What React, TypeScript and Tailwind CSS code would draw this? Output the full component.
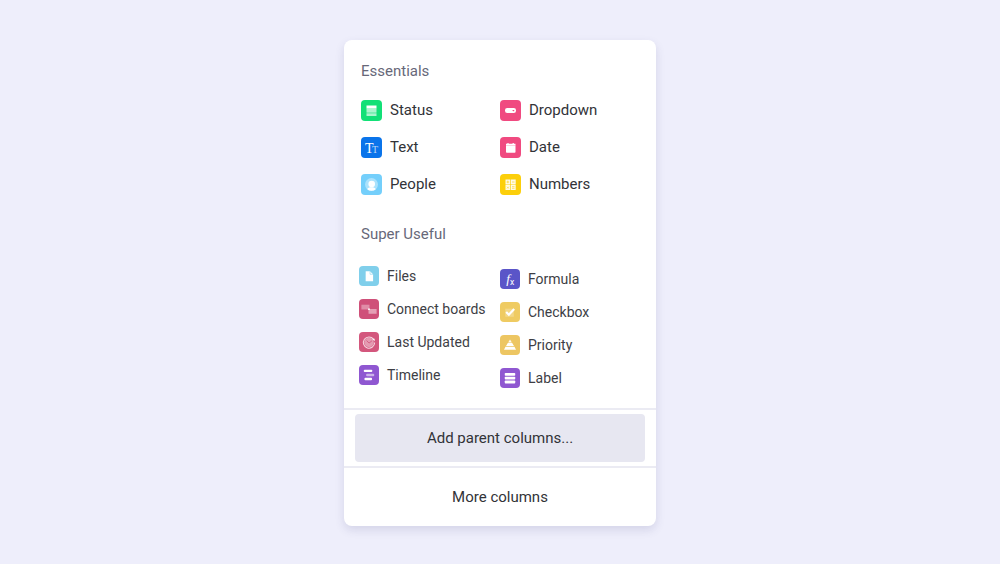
import React from 'react';

interface ColumnType {
  label: string;
  color: string;
  icon: React.ReactNode;
}

const essentials: ColumnType[] = [
  {
    label: 'Status',
    color: 'bg-[#12e077]',
    icon: (
      <>
        <rect x="5.5" y="5.5" width="10" height="3" fill="#fff" />
        <rect x="5.5" y="8.5" width="10" height="3.5" fill="#fff" opacity="0.65" />
        <rect x="5.5" y="12" width="10" height="1.5" fill="#fff" opacity="0.45" />
        <rect x="5.5" y="13.5" width="10" height="2.5" fill="#fff" opacity="0.65" />
      </>
    ),
  },
  {
    label: 'Dropdown',
    color: 'bg-[#f04a80]',
    icon: (
      <>
        <rect x="5" y="8" width="11" height="5" rx="2.2" fill="#fff" />
        <path d="M12.2 10l1.2 1.4 1.2-1.4z" fill="#f04a80" />
      </>
    ),
  },
  {
    label: 'Text',
    color: 'bg-[#0a74ea]',
    icon: (
      <>
        <text x="4" y="16" fontSize="14" fill="#fff" className="font-['Liberation_Serif',serif]">T</text>
        <text x="11" y="16" fontSize="10" fill="#fff" opacity="0.7" className="font-['Liberation_Serif',serif]">T</text>
      </>
    ),
  },
  {
    label: 'Date',
    color: 'bg-[#f04a80]',
    icon: (
      <>
        <path d="M6 6.8h1.4V6h1.2v.8h4V6h1.2v.8h1.7V15a.8.8 0 0 1-.8.8H6.8A.8.8 0 0 1 6 15z" fill="#fff" />
        <path d="M6 8.4h9.5" stroke="#f04a80" strokeWidth="0.5" opacity="0.6" />
      </>
    ),
  },
  {
    label: 'People',
    color: 'bg-[#74cffb]',
    icon: (
      <>
        <circle cx="10.5" cy="10.5" r="6.5" fill="#fff" opacity="0.4" />
        <circle cx="10.7" cy="10" r="3.3" fill="#fff" />
        <path d="M6.2 15.2c.6-1.3 2.2-1.9 4.3-1.9s3.700.6 4.300 1.900a6.500 6.500 0 0 1-8.600 0z" fill="#fff" />
      </>
    ),
  },
  {
    label: 'Numbers',
    color: 'bg-[#fccf0a]',
    icon: (
      <>
        <rect x="5.5" y="5.5" width="4.7" height="5" fill="#fff" opacity="0.9" />
        <rect x="10.8" y="5.5" width="4.9" height="5" fill="#fff" opacity="0.9" />
        <rect x="5.5" y="11" width="4.7" height="5" fill="#fff" opacity="0.9" />
        <rect x="10.8" y="11" width="4.9" height="5" fill="#fff" opacity="0.9" />
        <path
          d="M6.500 8h2.700M7.850 6.600v2.700M12 8h2.500M7 12.700l1.800 1.800M8.800 12.700l-1.800 1.800M12 12.700h2.500M12 14.300h2.500"
          stroke="#fccf0a"
          strokeWidth="0.6"
        />
      </>
    ),
  },
];

const usefulLeft: ColumnType[] = [
  {
    label: 'Files',
    color: 'bg-[#80cfeb]',
    icon: (
      <>
        <path d="M7 5.5h4.600l3.200 3.200v7.300H7z" fill="#fff" />
        <path d="M11.6 5.5v3.200h3.200" fill="none" stroke="#80cfeb" strokeWidth="0.6" />
      </>
    ),
  },
  {
    label: 'Connect boards',
    color: 'bg-[#cf5079]',
    icon: (
      <>
        <rect x="2.5" y="6" width="8.5" height="5" fill="#fff" opacity="0.35" />
        <rect x="10" y="10.5" width="8.5" height="5" fill="#fff" opacity="0.45" />
        <circle cx="10.5" cy="10.7" r="0.9" fill="#fff" />
      </>
    ),
  },
  {
    label: 'Last Updated',
    color: 'bg-[#d3577d]',
    icon: (
      <>
        <circle cx="10.5" cy="11" r="5" fill="#fff" opacity="0.4" />
        <path
          d="M15.200 7.500A5.900 5.900 0 1 0 16.400 11"
          fill="none"
          stroke="#fff"
          strokeWidth="1.1"
          opacity="0.75"
        />
        <path d="M8 9l2.500 2.600L13.600 9.300" fill="none" stroke="#d3577d" strokeWidth="0.9" />
        <path d="M13.800 7.200h2.600v2.600z" fill="#fff" />
      </>
    ),
  },
  {
    label: 'Timeline',
    color: 'bg-[#8f57d1]',
    icon: (
      <>
        <rect x="5" y="5" width="9" height="2.4" rx="1" fill="#fff" />
        <rect x="7.5" y="9.3" width="8.5" height="2.4" rx="1" fill="#fff" opacity="0.55" />
        <rect x="5.7" y="13.5" width="8" height="2.4" rx="1" fill="#fff" />
      </>
    ),
  },
];

const usefulRight: ColumnType[] = [
  {
    label: 'Formula',
    color: 'bg-[#5a55c8]',
    icon: (
      <>
        <text x="6.5" y="15" fontSize="14" fontStyle="italic" fill="#fff" className="font-['Liberation_Serif',serif]">f</text>
        <text x="10.5" y="16.5" fontSize="9" fill="#fff" className="font-['Roboto',sans-serif]">x</text>
      </>
    ),
  },
  {
    label: 'Checkbox',
    color: 'bg-[#efcb62]',
    icon: (
      <>
        <rect x="5.5" y="7" width="9" height="8.5" fill="#fff" opacity="0.25" />
        <path d="M6.500 10.500l2.800 2.900 5.600-6" fill="none" stroke="#fff" strokeWidth="2.3" />
      </>
    ),
  },
  {
    label: 'Priority',
    color: 'bg-[#edc662]',
    icon: (
      <>
        <path d="M10.500 4.800l2 3.200h-4z" fill="#fff" opacity="0.9" />
        <path d="M8.200 8.500h4.600l1.900 3.100H6.300z" fill="#fff" />
        <path d="M5.800 12.300h9.400l1.600 3.300H4.200z" fill="#fff" />
      </>
    ),
  },
  {
    label: 'Label',
    color: 'bg-[#8f57d1]',
    icon: (
      <>
        <rect x="5" y="5.2" width="11" height="3" rx="0.8" fill="#fff" />
        <rect x="5" y="9.2" width="11" height="3" rx="0.8" fill="#fff" />
        <rect x="5" y="13.2" width="11" height="3" rx="0.8" fill="#fff" />
      </>
    ),
  },
];

const ColumnButton: React.FC<{ column: ColumnType; small?: boolean }> = ({ column, small }) => {
  return (
    <button
      type="button"
      className={`flex items-center gap-2 text-left whitespace-nowrap ${small ? 'h-5 text-sm text-[#3d3e45]' : 'h-[21px]'}`}
    >
      <span className={`shrink-0 rounded ${column.color} ${small ? 'size-5' : 'size-[21px]'}`}>
        <svg viewBox="0 0 21 21" className="size-full" aria-hidden="true">
          {column.icon}
        </svg>
      </span>
      <span className={small ? 'leading-5' : 'pb-0.5 leading-5'}>{column.label}</span>
    </button>
  );
};

export default function App() {
  return (
    <main className="flex min-h-screen items-start justify-center bg-[#eeeefb] pt-10 pb-9 font-['Roboto',sans-serif] text-[15px] text-[#323338]">
      <div className="w-full max-w-[312px] rounded-lg bg-white shadow-[0_4px_10px_rgba(60,60,120,0.14)]">
        <section className="px-[17px] pt-[19px]">
          <h2 className="leading-6 text-[#676879]">Essentials</h2>
          <div className="mt-[17px] grid grid-cols-2 gap-y-4">
            {essentials.map((column) => (
              <ColumnButton key={column.label} column={column} />
            ))}
          </div>
        </section>

        <section className="pt-[27px] pb-5">
          <h2 className="px-[17px] leading-6 text-[#676879]">Super Useful</h2>
          <div className="mt-5 grid grid-cols-2 px-[15px]">
            <div className="flex flex-col gap-[13px]">
              {usefulLeft.map((column) => (
                <ColumnButton key={column.label} column={column} small />
              ))}
            </div>
            <div className="flex flex-col gap-[13px] pt-[3px]">
              {usefulRight.map((column) => (
                <ColumnButton key={column.label} column={column} small />
              ))}
            </div>
          </div>
        </section>

        <div className="border-y-2 border-[#ebebf3] px-[11px] py-1">
          <button type="button" className="h-12 w-full rounded bg-[#e7e7f1]">
            Add parent columns...
          </button>
        </div>
        <button type="button" className="h-[58px] w-full">
          More columns
        </button>
      </div>
    </main>
  );
}
